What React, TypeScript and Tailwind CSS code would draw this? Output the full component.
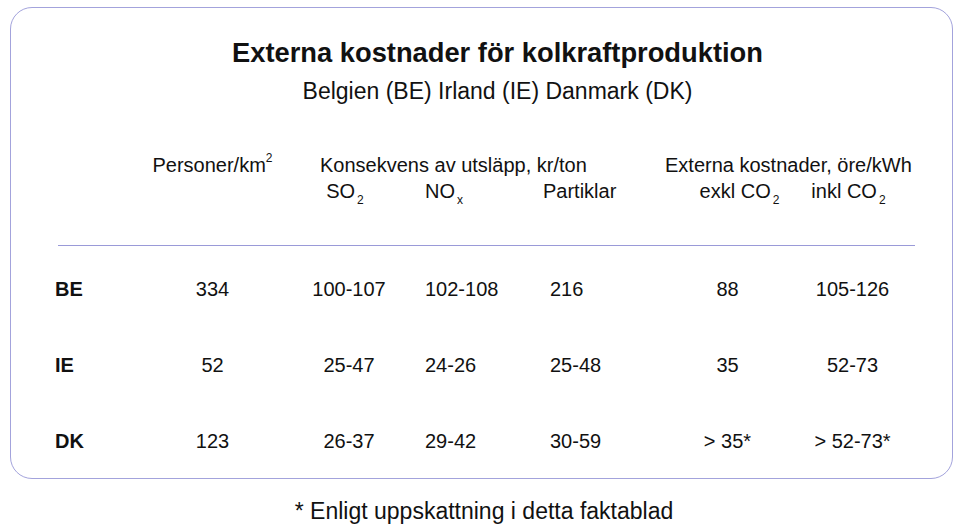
const rows = [
  { code: "BE", density: "334", so2: "100-107", nox: "102-108", part: "216", exkl: "88", inkl: "105-126" },
  { code: "IE", density: "52", so2: "25-47", nox: "24-26", part: "25-48", exkl: "35", inkl: "52-73" },
  { code: "DK", density: "123", so2: "26-37", nox: "29-42", part: "30-59", exkl: "> 35*", inkl: "> 52-73*" }
];

const gridCols = "grid grid-cols-[105px_105px_160px_125px_115px_125px_125px] items-center";

function Sub({ children }: { children: string }) {
  return <span className="relative top-[6px] ml-[2px] text-[12px] leading-none">{children}</span>;
}

export default function App() {
  return (
    <div className="h-[525px] w-[960px] overflow-hidden bg-white text-[#111] [font-family:'Liberation_Sans',Arial,sans-serif]">
      <div className="ml-[10px] mt-[7px] h-[472px] w-[943px] rounded-[22px] border border-[#a3a3dc] pt-[30px]">
        <h1 className="h-[30px] pl-[32px] text-center text-[27.3px] font-bold leading-[30px]">
          Externa kostnader för kolkraftproduktion
        </h1>
        <p className="mt-[9px] h-[28px] pl-[32px] text-center text-[23px] leading-[28px]">
          Belgien (BE) Irland (IE) Danmark (DK)
        </p>

        <div className={`${gridCols} mt-[47px] h-[26px] pl-[44px] text-[20px] leading-[26px]`}>
          <div />
          <div className="flex justify-center whitespace-nowrap">
            <span>
              Personer/km<span className="relative -top-[2px] align-super text-[12px] leading-none">2</span>
            </span>
          </div>
          <div className="col-span-3 whitespace-nowrap pl-[55px]">Konsekvens av utsläpp, kr/ton</div>
          <div className="col-span-2 whitespace-nowrap">Externa kostnader, öre/kWh</div>
        </div>

        <div className={`${gridCols} h-[26px] pl-[44px] text-[20px] leading-[26px]`}>
          <div />
          <div />
          <div className="text-center">
            SO<Sub>2</Sub>
          </div>
          <div>
            NO<Sub>x</Sub>
          </div>
          <div className="-ml-[7px]">Partiklar</div>
          <div className="flex justify-center whitespace-nowrap pl-[24px]">
            <span>
              exkl CO<Sub>2</Sub>
            </span>
          </div>
          <div className="flex justify-center whitespace-nowrap pr-[8px]">
            <span>
              inkl CO<Sub>2</Sub>
            </span>
          </div>
        </div>

        <div className="ml-[47px] mt-[41px] h-px w-[857px] bg-[#9a9ad8]" />

        <div className="mt-[28px] flex flex-col gap-[46px] pl-[44px] text-[20px] leading-[30px]">
          {rows.map((r) => (
            <div key={r.code} className={`${gridCols} h-[30px]`}>
              <div className="font-bold">{r.code}</div>
              <div className="text-center">{r.density}</div>
              <div className="pl-[8px] text-center">{r.so2}</div>
              <div>{r.nox}</div>
              <div>{r.part}</div>
              <div className="text-center">{r.exkl}</div>
              <div className="text-center">{r.inkl}</div>
            </div>
          ))}
        </div>
      </div>

      <p className="mt-[18px] pl-[8px] text-center text-[23px] leading-[28px]">
        * Enligt uppskattning i detta faktablad
      </p>
    </div>
  );
}
